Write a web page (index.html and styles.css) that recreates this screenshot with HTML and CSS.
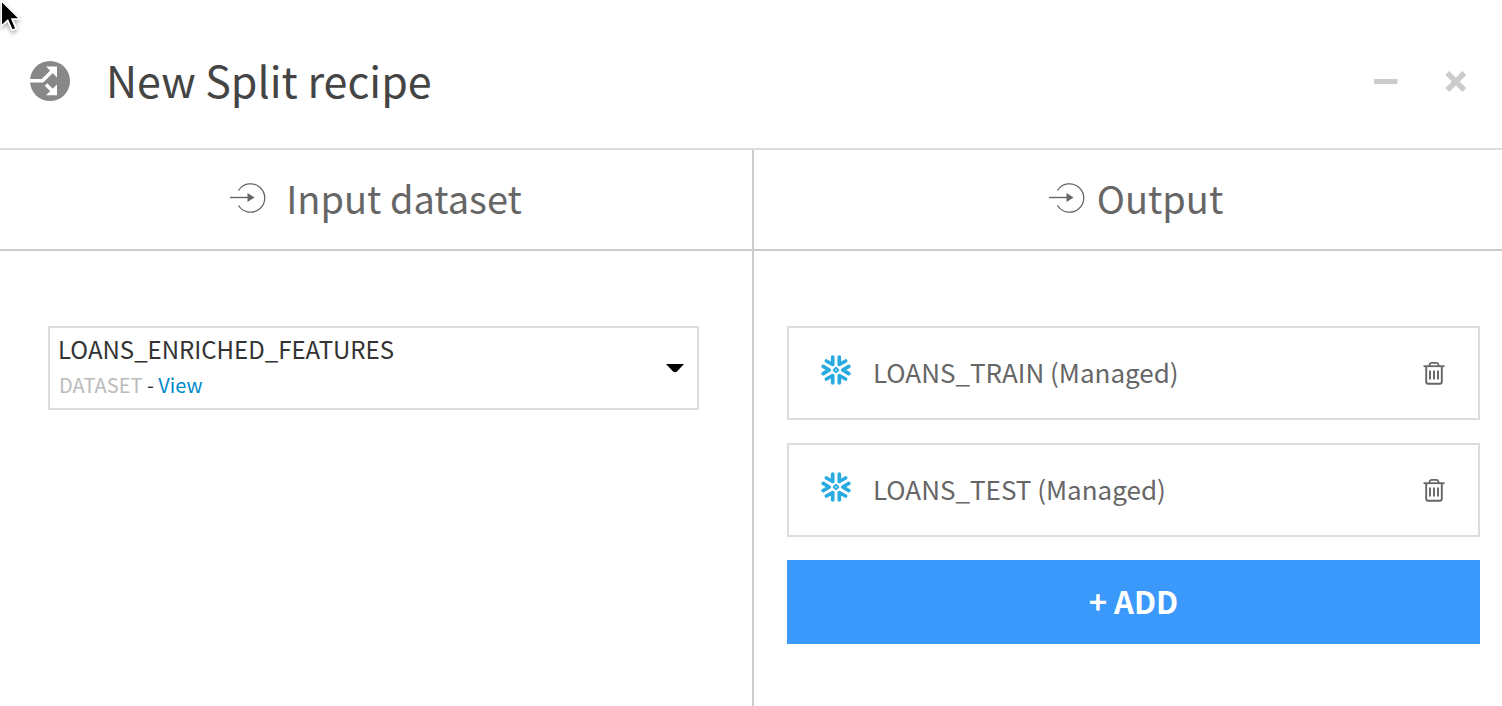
FILE: index.html
```html
<!DOCTYPE html>
<html lang="en">
<head>
<meta charset="utf-8">
<meta name="viewport" content="width=device-width, initial-scale=1">
<title>New Split recipe</title>
<link rel="stylesheet" href="styles.css">
</head>
<body>
<svg width="0" height="0" class="sprite" aria-hidden="true">
  <symbol id="arrow-in" viewBox="0 0 36 32">
    <path d="M8.5 8.5A14.2 14.2 0 1 1 8.5 23.5" fill="none" stroke="currentColor" stroke-width="1.3"/>
    <path d="M0 15.500h19" stroke="currentColor" stroke-width="1.4"/>
    <path d="M17.500 11l7 4.500-7 4.500z" fill="currentColor"/>
  </symbol>
  <symbol id="snowflake" viewBox="0 0 30 30">
    <g fill="none" stroke="#29abe2" stroke-width="3.700" stroke-linecap="round" stroke-linejoin="round">
      <path d="M11.700 2.200v7.300L5.400 6"/>
      <path d="M18.300 2.200v7.300L24.600 6"/>
      <path d="M11.700 27.800v-7.300L5.400 24"/>
      <path d="M18.300 27.800v-7.300L24.600 24"/>
      <path d="M2.200 11.400L8.200 15l-6 3.600"/>
      <path d="M27.800 11.400L21.800 15l6 3.600"/>
    </g>
    <path d="M15 12.700l2.300 2.300-2.300 2.300-2.300-2.300z" fill="none" stroke="#29abe2" stroke-width="1.900" stroke-linejoin="round"/>
  </symbol>
  <symbol id="trash" viewBox="0 0 22 24">
    <g fill="none" stroke="currentColor">
      <path d="M.5 5.200h21" stroke-width="1.800"/>
      <path d="M6.500 5V3.600Q7 1.800 8.800 1.800h4.400q1.800 0 2.300 1.800V5" stroke-width="1.700"/>
      <path d="M3.200 5.500v15.200q0 2 2 2h11.600q2 0 2-2V5.500" stroke-width="1.900"/>
      <path d="M7 9.500v9M11 9.500v9M15 9.500v9" stroke-width="1.900"/>
    </g>
  </symbol>
</svg>

<svg class="cursor" viewBox="0 0 24 36" aria-hidden="true">
  <path d="M1 0V27.500L7.500 22L11.500 31.500L17.500 29L13.500 20H21Z" fill="#fff"/>
  <path d="M2 2.500V24.500L8 19L12.500 29.300L15 28.200L10.800 18.200H18Z" fill="#000"/>
</svg>

<main class="dialog">
  <header class="dialog-header">
    <svg class="recipe-icon" viewBox="0 0 40 40" aria-hidden="true">
      <circle cx="20" cy="20" r="20" fill="#888"/>
      <path d="M0 19.800H12.500L22.500 9.800" fill="none" stroke="#fff" stroke-width="3.600"/>
      <path d="M16 5.500H27V16.500Z" fill="#fff"/>
      <path d="M16 23.500L23 30.500" stroke="#fff" stroke-width="3.600"/>
      <path d="M27 23.500V34.300H16Z" fill="#fff"/>
    </svg>
    <h1 class="dialog-title">New Split recipe</h1>
    <div class="window-actions">
      <button class="icon-button" type="button" aria-label="Minimize">
        <svg viewBox="0 0 24 24"><path d="M0 12.500h23.500" stroke="#ccc" stroke-width="5"/></svg>
      </button>
      <button class="icon-button" type="button" aria-label="Close">
        <svg viewBox="0 0 24 24"><path d="M3.300 4l17 17M20.300 4l-17 17" stroke="#ccc" stroke-width="5.400"/></svg>
      </button>
    </div>
  </header>

  <div class="columns">
    <section class="column">
      <h2 class="column-title input-title"><svg class="arrow" aria-hidden="true"><use href="#arrow-in"/></svg>Input dataset</h2>
      <div class="input-body">
        <div class="picker">
          <select class="picker-select" aria-label="Input dataset">
            <option>LOANS_ENRICHED_FEATURES</option>
          </select>
          <p class="picker-meta"><span class="kind">DATASET</span> - <a class="view-link" href="#">View</a></p>
          <svg class="caret" viewBox="0 0 18 9" aria-hidden="true"><path d="M0 0h18L11 7.500Q9 9 7 7.500Z"/></svg>
        </div>
      </div>
    </section>

    <section class="column">
      <h2 class="column-title output-title"><svg class="arrow" aria-hidden="true"><use href="#arrow-in"/></svg>Output</h2>
      <div class="output-body">
        <div class="output-item">
          <svg class="snowflake" aria-hidden="true"><use href="#snowflake"/></svg>
          <span class="output-name">LOANS_TRAIN (Managed)</span>
          <button class="trash-button" type="button" aria-label="Delete LOANS_TRAIN"><svg><use href="#trash"/></svg></button>
        </div>
        <div class="output-item">
          <svg class="snowflake" aria-hidden="true"><use href="#snowflake"/></svg>
          <span class="output-name">LOANS_TEST (Managed)</span>
          <button class="trash-button" type="button" aria-label="Delete LOANS_TEST"><svg><use href="#trash"/></svg></button>
        </div>
        <button class="add-button" type="button">+ ADD</button>
      </div>
    </section>
  </div>
</main>
</body>
</html>
```

FILE: styles.css
```css
* {
  box-sizing: border-box;
}

body {
  margin: 0;
  background: #fff;
  color: #333;
  font-family: "Noto Sans CJK SC", "Noto Sans", sans-serif;
}

button,
select {
  font: inherit;
}

svg {
  display: block;
}

.sprite {
  position: absolute;
}

.cursor {
  position: absolute;
  top: 0;
  left: 0;
  width: 24px;
  height: 36px;
  filter: drop-shadow(0 2px 2px rgba(0, 0, 0, 0.35));
}

.dialog {
  display: flex;
  flex-direction: column;
  min-height: 100vh;
}

.dialog-header {
  display: flex;
  align-items: center;
  padding: 48px 34px 34px 30px;
  border-bottom: 2px solid #ddd;
}

.recipe-icon {
  width: 40px;
  height: 40px;
}

.dialog-title {
  flex: 1;
  margin: 0 0 0 36px;
  padding-bottom: 4px;
  color: #444;
  font-size: 43px;
  font-weight: 400;
  line-height: 62px;
}

.window-actions {
  display: flex;
  gap: 46px;
}

.icon-button,
.trash-button {
  padding: 0;
  border: 0;
  background: none;
  cursor: pointer;
}

.icon-button svg {
  width: 24px;
  height: 24px;
}

.columns {
  display: grid;
  flex: 1;
  grid-template-columns: 754fr 748fr;
}

.column:first-child {
  border-right: 2px solid #ccc;
}

.column-title {
  display: flex;
  align-items: center;
  justify-content: center;
  margin: 0;
  padding-bottom: 3px;
  border-bottom: 2px solid #ccc;
  color: #666;
  font-size: 38px;
  font-weight: 400;
  line-height: 96px;
}

.arrow {
  width: 36px;
  height: 32px;
}

.input-title {
  gap: 20px;
}

.output-title {
  gap: 12px;
  padding-left: 16px;
}

.input-body {
  padding: 75px 53px 48px 48px;
}

.picker {
  display: grid;
  border: 2px solid #ddd;
}

.picker > * {
  grid-area: 1 / 1;
}

.picker-select {
  width: 100%;
  height: 80px;
  padding: 0 48px 40px 8px;
  border: 0;
  border-radius: 0;
  appearance: none;
  background: transparent;
  color: #333;
  font-size: 24px;
}

.picker-meta {
  place-self: end start;
  margin: 0 0 8px 9px;
  font-size: 20px;
  line-height: 30px;
}

.kind {
  color: #bbb;
}

.view-link {
  color: #0088cc;
  text-decoration: none;
}

.caret {
  place-self: center end;
  width: 18px;
  height: 9px;
  margin-right: 13px;
  pointer-events: none;
}

.output-body {
  display: flex;
  flex-direction: column;
  gap: 23px;
  padding: 75px 22px 48px 33px;
}

.output-item {
  display: flex;
  align-items: center;
  padding: 26px 33px 26px 32px;
  border: 2px solid #ddd;
  color: #666;
  font-size: 26px;
  line-height: 36px;
}

.snowflake {
  width: 30px;
  height: 30px;
  margin-bottom: 6px;
}

.output-name {
  flex: 1;
  margin-left: 22px;
  padding-bottom: 2px;
}

.trash-button {
  color: #666;
}

.trash-button svg {
  width: 22px;
  height: 24px;
}

.add-button {
  padding: 17px 18px 19px;
  border: 0;
  background: #3b99fc;
  color: #fff;
  font-size: 31px;
  font-weight: 700;
  line-height: 48px;
  cursor: pointer;
}
```
